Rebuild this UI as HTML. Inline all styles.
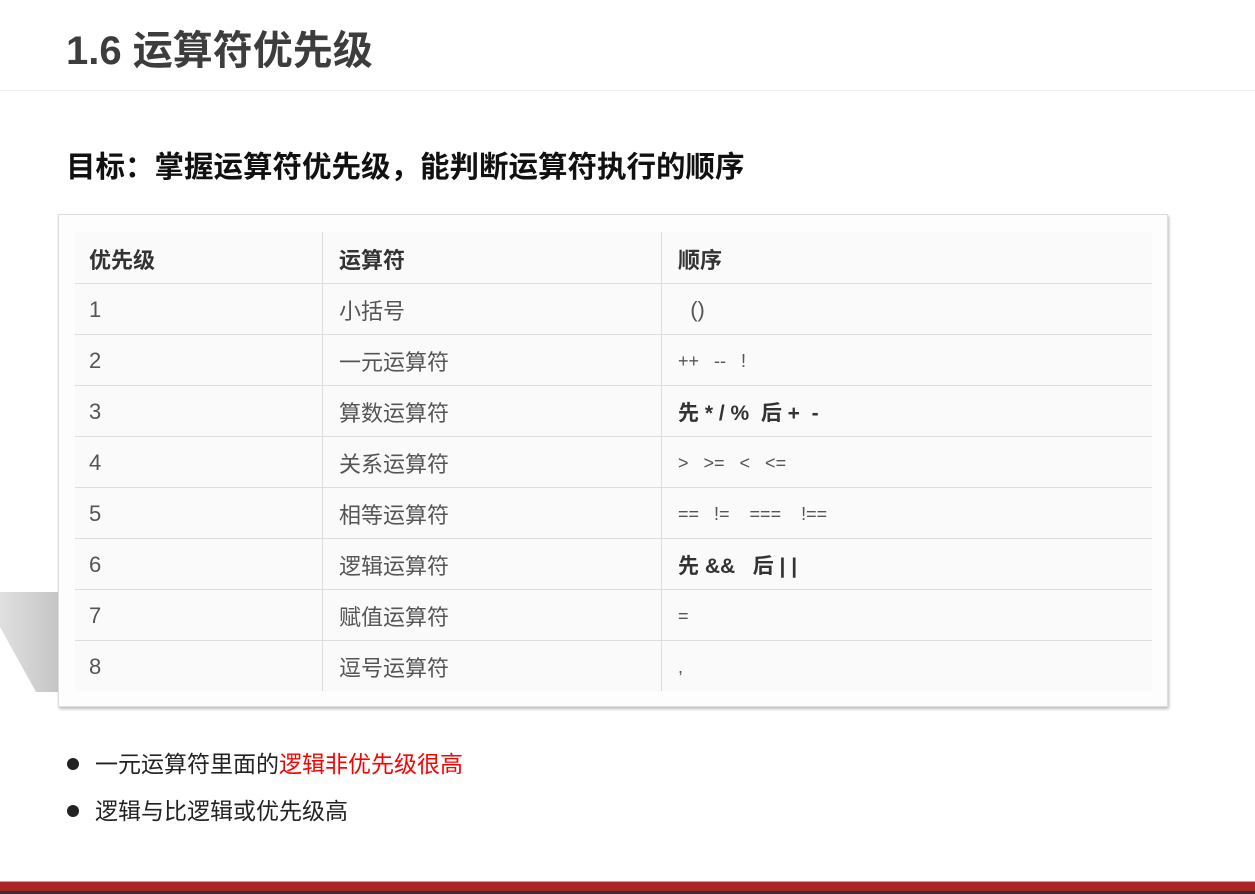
<!DOCTYPE html>
<html><head><meta charset="utf-8"><style>
body{margin:0;width:1255px;height:894px;background:#fff;position:relative;overflow:hidden;font-family:"Liberation Sans","Noto Sans CJK SC",sans-serif;}
.t{position:absolute;left:66px;top:25px;font-size:40px;font-weight:bold;color:#3d3d3d;line-height:52px;white-space:nowrap}
.hl{position:absolute;left:0;right:0;top:90px;height:1px;background:#eee}
.s{position:absolute;left:66px;top:148px;font-size:29.5px;font-weight:bold;color:#111;line-height:40px;white-space:nowrap}
.shadow{position:absolute;left:0;top:592px;width:60px;height:100px;background:linear-gradient(90deg,#e0e0e0,#c4c4c4);clip-path:polygon(0 0,100% 0,100% 100%,60% 100%,0 35%)}
.box{position:absolute;left:58px;top:214px;width:1108px;height:491px;background:#fdfdfd;border:1px solid #ddd;box-shadow:1px 2px 3px #bbb}
table{position:absolute;left:16px;top:17px;border-collapse:collapse;width:1077px;background:#fafafa}
td{height:48px;border-bottom:1px solid #ddd;border-left:1px solid #ddd;padding:2px 0 0 16px;font-size:22px;color:#555;vertical-align:middle}
tr td:first-child{border-left:none;padding-left:14px}
tr:last-child td{border-bottom:none}
tr:first-child td{height:49px;font-weight:bold;color:#333}
.b{font-weight:bold;color:#333}
.bl{position:absolute;left:67px;font-size:23px;color:#222;white-space:nowrap;line-height:30px}
.bl i{display:inline-block;width:12px;height:12px;border-radius:50%;background:#222;margin-right:16px;vertical-align:middle;position:relative;top:-2px}
.r{color:#f00}
.red{position:absolute;left:0;right:0;top:881px;height:10px;background:#a82626;border-top:1px solid #d99}
.dk{position:absolute;left:0;right:0;top:891px;height:3px;background:#333}
</style></head><body>
<div class="t">1.6 运算符优先级</div>
<div class="hl"></div>
<div class="s">目标：掌握运算符优先级，能判断运算符执行的顺序</div>
<div class="shadow"></div>
<div class="box">
<table>
<tr><td style="width:233px">优先级</td><td style="width:322px">运算符</td><td>顺序</td></tr>
<tr><td>1</td><td>小括号</td><td>&nbsp;&nbsp;()</td></tr>
<tr><td>2</td><td>一元运算符</td><td style="font-size:18px">++&nbsp;&nbsp;&nbsp;--&nbsp;&nbsp;&nbsp;!</td></tr>
<tr><td>3</td><td>算数运算符</td><td class="b" style="font-size:21px">先 * / %&nbsp;&nbsp;后 +&nbsp;&nbsp;-</td></tr>
<tr><td>4</td><td>关系运算符</td><td style="font-size:18px">&gt;&nbsp;&nbsp;&nbsp;&gt;=&nbsp;&nbsp;&nbsp;&lt;&nbsp;&nbsp;&nbsp;&lt;=</td></tr>
<tr><td>5</td><td>相等运算符</td><td style="font-size:18px">==&nbsp;&nbsp;&nbsp;!=&nbsp;&nbsp;&nbsp;&nbsp;===&nbsp;&nbsp;&nbsp;&nbsp;!==</td></tr>
<tr><td>6</td><td>逻辑运算符</td><td class="b" style="font-size:21px">先 &amp;&amp;&nbsp;&nbsp;&nbsp;后 | |</td></tr>
<tr><td>7</td><td>赋值运算符</td><td style="font-size:18px">=</td></tr>
<tr><td>8</td><td>逗号运算符</td><td style="font-size:18px">,</td></tr>
</table>
</div>
<div class="bl" style="top:749px"><i></i>一元运算符里面的<span class="r">逻辑非优先级很高</span></div>
<div class="bl" style="top:796px"><i></i>逻辑与比逻辑或优先级高</div>
<div class="red"></div><div class="dk"></div>
</body></html>
